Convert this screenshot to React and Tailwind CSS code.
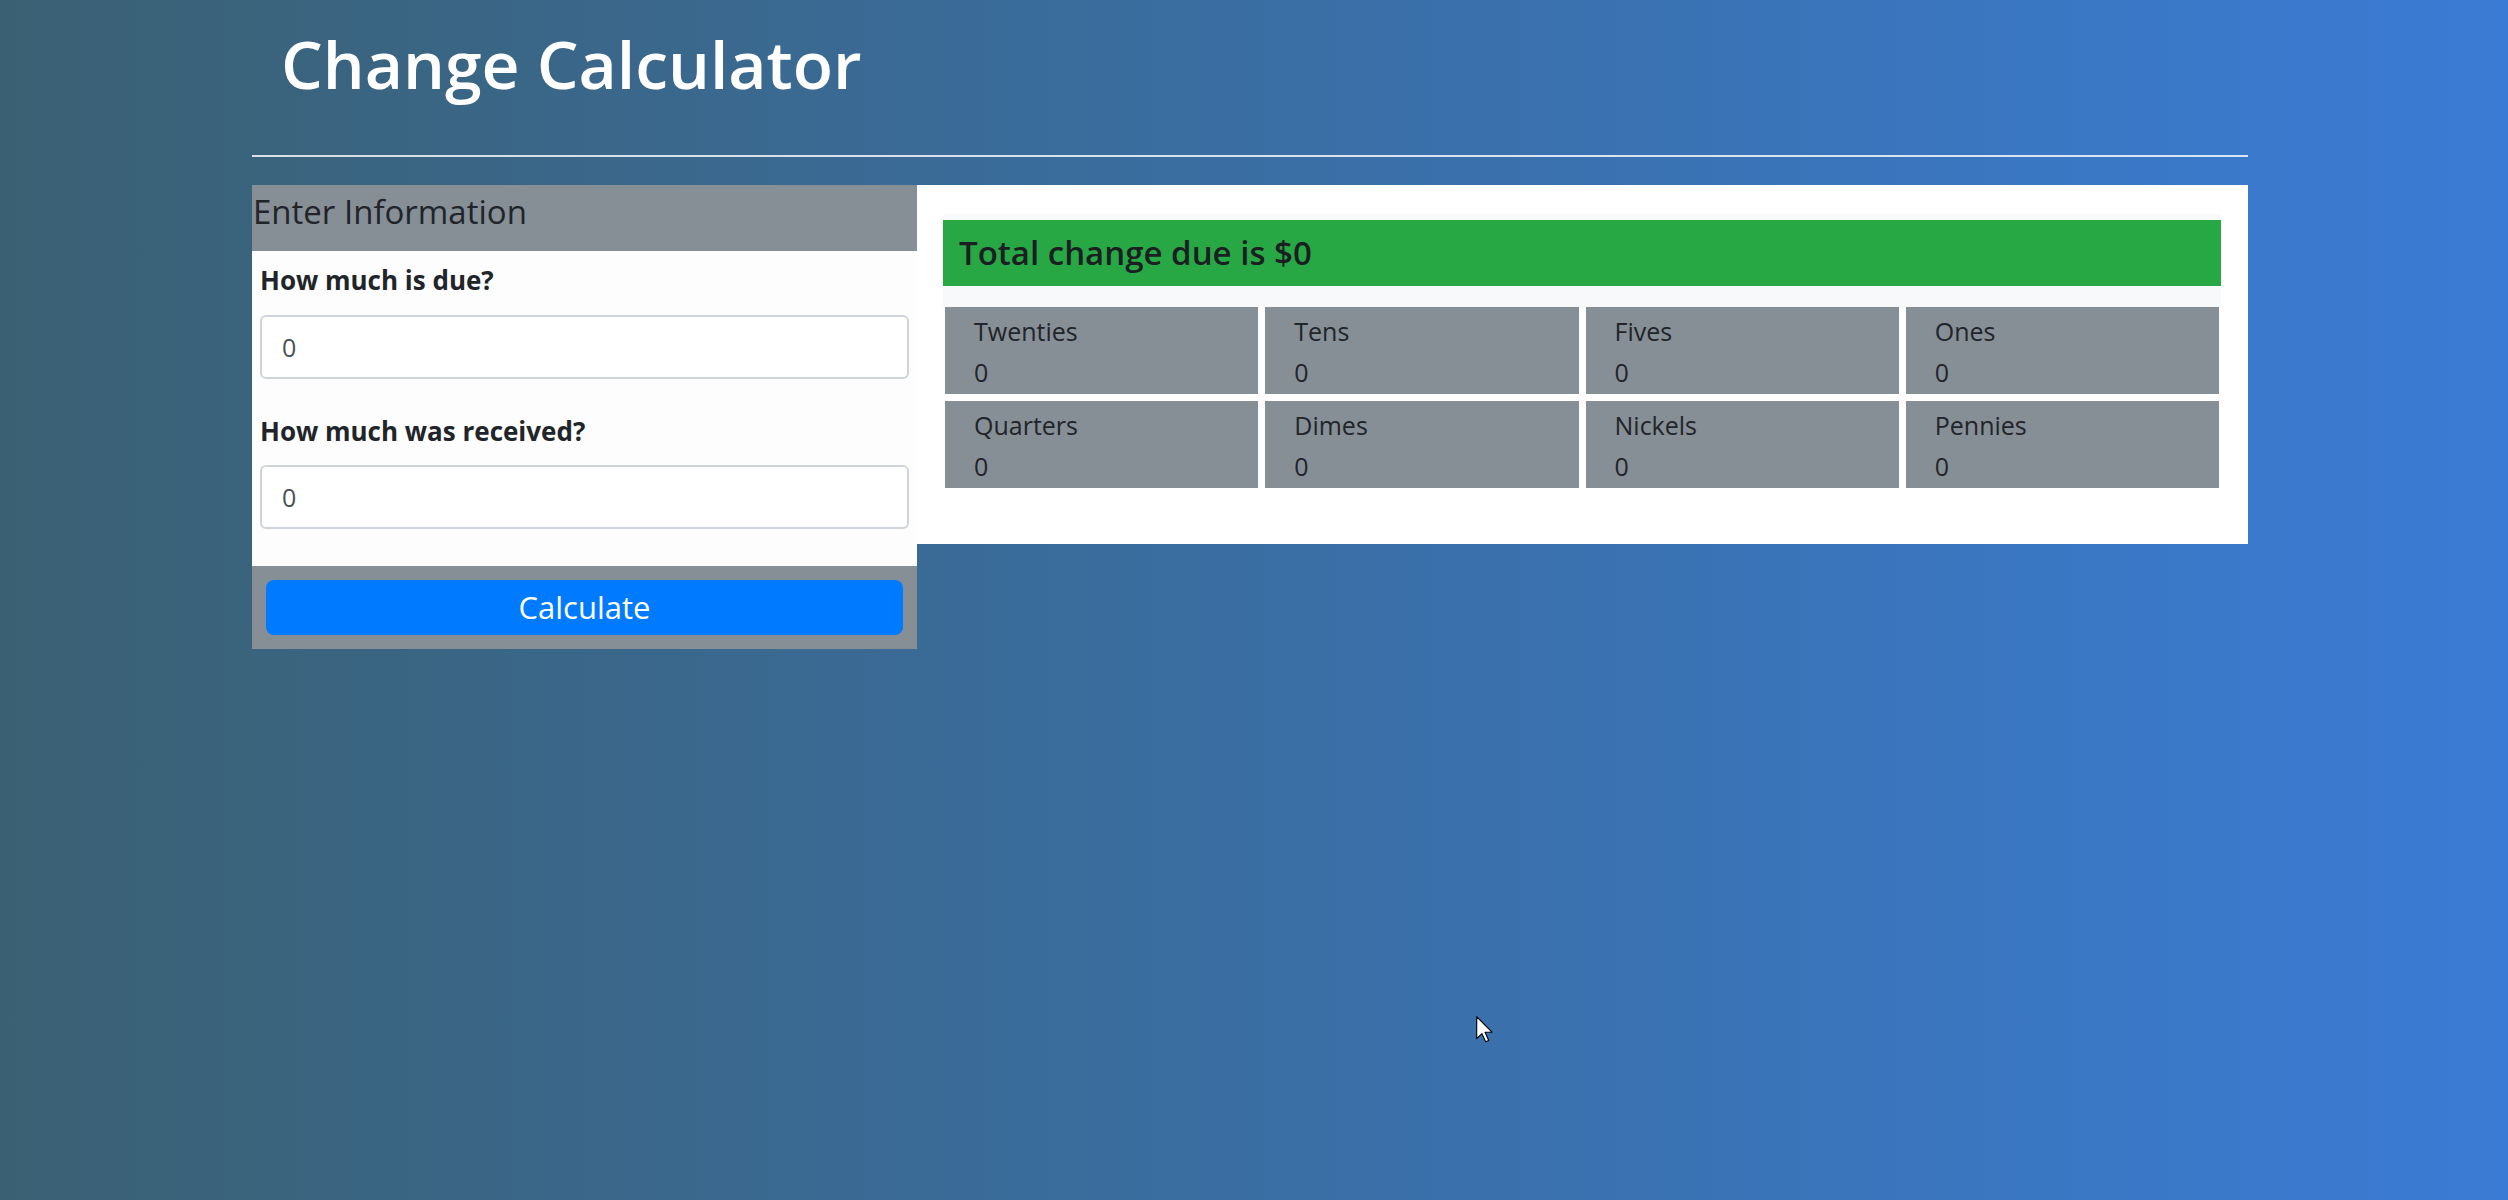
import React, { useState } from 'react';

const DENOMS = [
  'Twenties',
  'Tens',
  'Fives',
  'Ones',
  'Quarters',
  'Dimes',
  'Nickels',
  'Pennies',
];

const App = () => {
  const [due, setDue] = useState('0');
  const [received, setReceived] = useState('0');

  return (
    <div className="relative h-[1200px] w-full overflow-hidden bg-gradient-to-r from-[#3a6073] to-[#3a7bd5] font-['Open_Sans',sans-serif]">
      <div className="ml-[252px] w-[1996px] pt-[30px]">
        <h1 className="pl-[29px] text-[66px] font-semibold leading-none text-white">
          Change Calculator
        </h1>
        <hr className="mt-[59px] h-[2px] border-0 bg-white/80" />

        <div className="mt-[28px] flex items-start">
          {/* Enter Information */}
          <div className="w-[665px]">
            <div className="h-[66px] bg-[#868e96] pt-[10px] pl-[1px]">
              <h4 className="text-[33px] leading-none text-[#212529]">Enter Information</h4>
            </div>
            <div className="bg-[#fdfdfe] px-[8px] pt-[16px] pb-[37px]">
              <label htmlFor="due" className="block text-[26px] font-bold leading-none text-[#212529]">
                How much is due?
              </label>
              <input
                id="due"
                type="text"
                value={due}
                onChange={(e) => setDue(e.target.value)}
                className="mt-[22px] block h-[64px] w-full rounded-[6px] border-2 border-[#ced4da] bg-white pl-[20px] text-[25px] text-[#495057] outline-none"
              />
              <label htmlFor="received" className="mt-[39px] block text-[26px] font-bold leading-none text-[#212529]">
                How much was received?
              </label>
              <input
                id="received"
                type="text"
                value={received}
                onChange={(e) => setReceived(e.target.value)}
                className="mt-[21px] block h-[64px] w-full rounded-[6px] border-2 border-[#ced4da] bg-white pl-[20px] text-[25px] text-[#495057] outline-none"
              />
            </div>
            <div className="bg-[#868e96] p-[14px]">
              <button
                type="button"
                className="h-[55px] w-full rounded-[8px] bg-[#007bff] text-[31px] leading-none text-white"
              >
                Calculate
              </button>
            </div>
          </div>

          {/* Results */}
          <div className="flex-1 bg-white pt-[29px] pl-[26px] pr-[27px] pb-[56px]">
            <div className="bg-[#f8f9fa] pt-[6px] pb-[21px]">
              <div className="h-[66px] bg-[#28a745] pl-[16px] pt-[16px]">
                <h4 className="text-[33px] font-semibold leading-none text-[#1b1f22]">
                  Total change due is $0
                </h4>
              </div>
            </div>
            <div className="grid grid-cols-4 gap-[7px] px-[2px]">
              {DENOMS.map((name) => (
                <div key={name} className="h-[87px] bg-[#868e96] pl-[29px] pt-[4px] text-[25px] leading-[41px] text-[#212529]">
                  <div>{name}</div>
                  <div>0</div>
                </div>
              ))}
            </div>
          </div>
        </div>
      </div>

      {/* mouse pointer */}
      <svg
        className="absolute left-[1476px] top-[1016px]"
        width="17"
        height="27"
        viewBox="0 0 12 19"
      >
        <path d="M0.5 0.5 L0.5 16 L4.2 12.4 L6.8 18.2 L9 17.2 L6.4 11.4 L11.3 11.4 Z" fill="white" stroke="black" strokeWidth="0.8" strokeLinejoin="round" />
      </svg>
    </div>
  );
};

export default App;
